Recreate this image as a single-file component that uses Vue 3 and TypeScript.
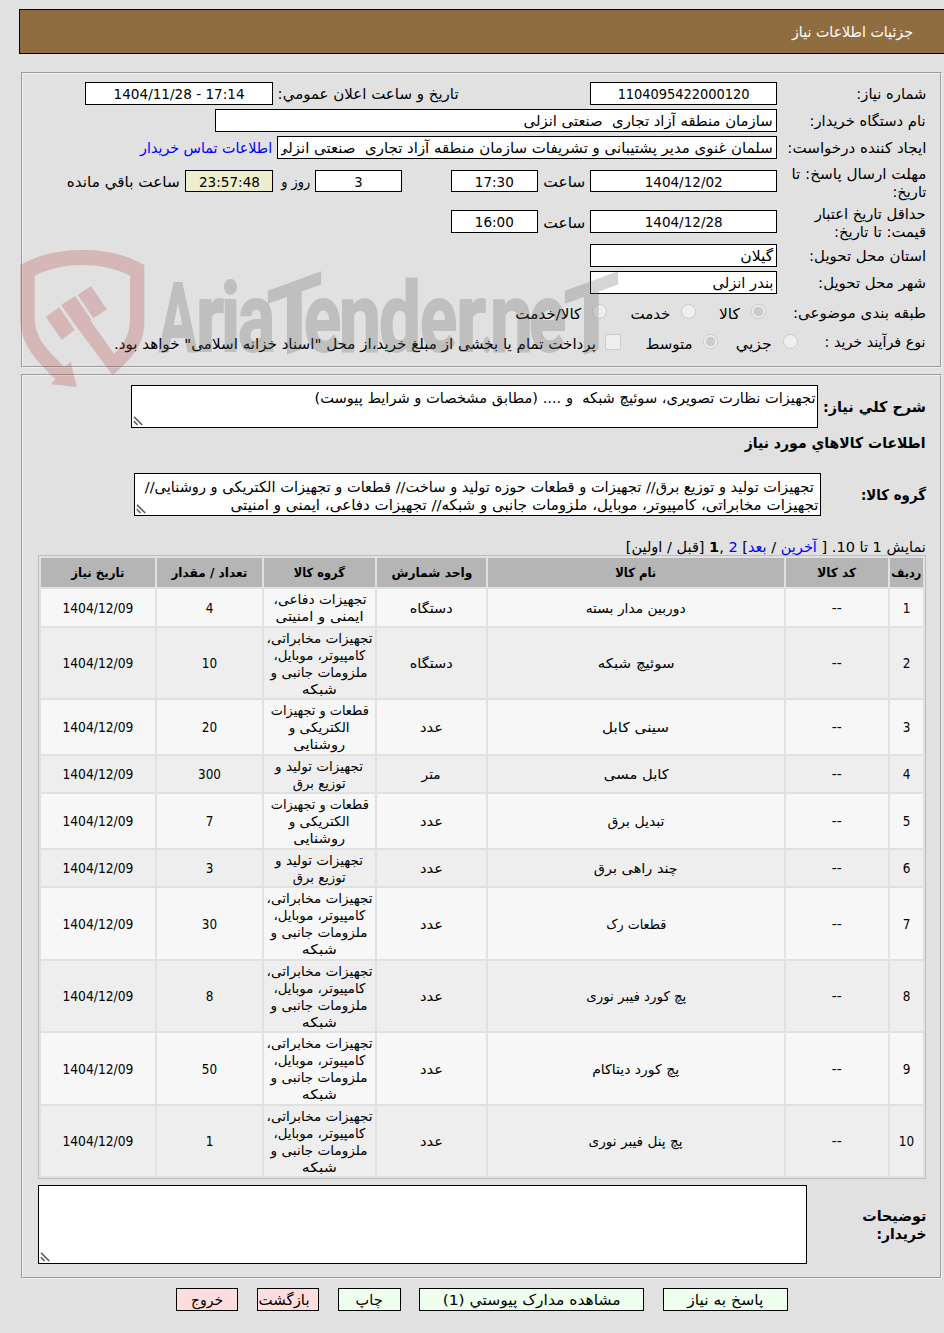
<script setup lang="ts">
interface FitText {
  text: string
  w: number
}

interface Item {
  id: number
  name: FitText
  unit: FitText
  group: FitText[]
  qty: number
}

// Stretch a run of text to the given width, and keep that width in the layout
const vFit = {
  mounted(el: HTMLElement, binding: { value: number }) {
    const natural = el.getBoundingClientRect().width
    if (!natural) return
    el.style.transform = `scaleX(${binding.value / natural})`
    el.style.marginLeft = `${binding.value - natural}px`
  }
}

const t = (text: string, w: number): FitText => ({ text, w })

const device = t('دستگاه', 43)
const piece = t('عدد', 23)
const meter = t('متر', 19)

const telecom = [
  t('تجهیزات مخابراتی،', 106),
  t('کامپیوتر، موبایل،', 92),
  t('ملزومات جانبی و', 97),
  t('شبکه', 35)
]
const electric = [t('قطعات و تجهیزات', 98), t('الکتریکی و', 61), t('روشنایی', 52)]
const power = [t('تجهیزات تولید و', 88), t('توزیع برق', 53)]
const safety = [t('تجهیزات دفاعی،', 93), t('ایمنی و امنیتی', 88)]

const headers = [
  t('ردیف', 30),
  t('کد کالا', 39),
  t('نام کالا', 41),
  t('واحد شمارش', 81),
  t('گروه کالا', 51),
  t('تعداد / مقدار', 76),
  t('تاریخ نیاز', 53)
]

const items: Item[] = [
  { id: 1, name: t('دوربین مدار بسته', 100), unit: device, group: safety, qty: 4 },
  { id: 2, name: t('سوئیچ شبکه', 77), unit: device, group: telecom, qty: 10 },
  { id: 3, name: t('سینی کابل', 67), unit: piece, group: electric, qty: 20 },
  { id: 4, name: t('کابل مسی', 65), unit: meter, group: power, qty: 300 },
  { id: 5, name: t('تبدیل برق', 57), unit: piece, group: electric, qty: 7 },
  { id: 6, name: t('چند راهی برق', 84), unit: piece, group: power, qty: 3 },
  { id: 7, name: t('قطعات رک', 60), unit: piece, group: telecom, qty: 30 },
  { id: 8, name: t('پچ کورد فیبر نوری', 100), unit: piece, group: telecom, qty: 8 },
  { id: 9, name: t('پچ کورد دیتاکام', 87), unit: piece, group: telecom, qty: 50 },
  { id: 10, name: t('پچ پنل فیبر نوری', 94), unit: piece, group: telecom, qty: 1 }
]

const buttons = [
  { ...t('پاسخ به نیاز', 76), cls: 'btn-reply' },
  { ...t('مشاهده مدارک پیوستي (1)', 178), cls: 'btn-docs' },
  { ...t('چاپ', 27), cls: 'btn-print' },
  { ...t('بازگشت', 51), cls: 'btn-back' },
  { ...t('خروج', 32), cls: 'btn-exit' }
]

// Wordmark letters: x, width, slanted
const letters: [string, number, number, boolean][] = [
  ['A', 159, 38, false],
  ['r', 196, 28, false],
  ['i', 221, 19, false],
  ['a', 238, 37, false],
  ['T', 267, 55, true],
  ['e', 304, 37, false],
  ['n', 339, 42, false],
  ['d', 379, 42, false],
  ['e', 420, 37, false],
  ['r', 456, 30, false],
  ['.', 481, 12, false],
  ['n', 490, 43, false],
  ['e', 529, 37, false],
  ['T', 564, 55, true]
]
</script>

<template>
  <div class="page" dir="rtl">
    <header class="title-bar"><span v-fit="121">جزئیات اطلاعات نیاز</span></header>

    <section class="panel summary">
      <div class="row">
        <label><span v-fit="70">شماره نیاز:</span></label>
        <div class="field w187 num"><span v-fit="132">1104095422000120</span></div>
        <div class="announce"><span v-fit="181">تاریخ و ساعت اعلان عمومي:</span></div>
        <div class="field w188 num"><span v-fit="131" dir="ltr">1404/11/28 - 17:14</span></div>
      </div>
      <div class="row">
        <label><span v-fit="116">نام دستگاه خریدار:</span></label>
        <div class="field w562"><span v-fit="249">سازمان منطقه آزاد تجاری&nbsp; صنعتی انزلی</span></div>
      </div>
      <div class="row">
        <label><span v-fit="139">ایجاد کننده درخواست:</span></label>
        <div class="field w500"><span v-fit="497">سلمان غنوی مدیر پشتیبانی و تشریفات سازمان منطقه آزاد تجاری&nbsp; صنعتی انزلی</span></div>
        <a class="after"><span v-fit="132">اطلاعات تماس خریدار</span></a>
      </div>
      <div class="row tall">
        <label><span v-fit="135">مهلت ارسال پاسخ: تا</span><br><span v-fit="34">تاریخ:</span></label>
        <div class="field short w187 num"><span v-fit="78">1404/12/02</span></div>
        <div class="hour"><span v-fit="42">ساعت</span></div>
        <div class="field short w87 num"><span v-fit="39">17:30</span></div>
        <div class="field short w87 num days">3</div>
        <div class="and"><span v-fit="29">روز و</span></div>
        <div class="field short w188 left-time num"><span v-fit="61">23:57:48</span></div>
        <div class="after"><span v-fit="113">ساعت باقي مانده</span></div>
      </div>
      <div class="row tall">
        <label><span v-fit="111">حداقل تاریخ اعتبار</span><br><span v-fit="92">قیمت: تا تاریخ:</span></label>
        <div class="field w187 num"><span v-fit="78">1404/12/28</span></div>
        <div class="hour"><span v-fit="42">ساعت</span></div>
        <div class="field w87 num"><span v-fit="39">16:00</span></div>
      </div>
      <div class="row">
        <label><span v-fit="117">استان محل تحویل:</span></label>
        <div class="field w187"><span v-fit="33">گیلان</span></div>
      </div>
      <div class="row">
        <label><span v-fit="108">شهر محل تحویل:</span></label>
        <div class="field w187"><span v-fit="61">بندر انزلی</span></div>
      </div>
      <div class="row kinds">
        <label><span v-fit="133">طبقه بندی موضوعی:</span></label>
        <i class="radio on first"></i><span class="opt"><span v-fit="21">کالا</span></span>
        <i class="radio"></i><span class="opt"><span v-fit="40">خدمت</span></span>
        <i class="radio"></i><span class="opt"><span v-fit="66">کالا/خدمت</span></span>
      </div>
      <div class="row process">
        <label class="narrow"><span v-fit="101">نوع فرآیند خرید :</span></label>
        <i class="radio first"></i><span class="opt"><span v-fit="36">جزیي</span></span>
        <i class="radio on"></i><span class="opt"><span v-fit="47">متوسط</span></span>
        <i class="check"></i>
        <span class="opt"><span v-fit="482">پرداخت تمام یا بخشی از مبلغ خرید،از محل "اسناد خزانه اسلامی" خواهد بود.</span></span>
      </div>
    </section>

    <section class="panel details">
      <div class="desc-row">
        <b><span v-fit="103">شرح کلي نیاز:</span></b>
        <div class="area area-desc">
          <span v-fit="501">تجهیزات نظارت تصویری، سوئیچ شبکه&nbsp; و .... (مطابق مشخصات و شرایط پیوست)</span>
          <svg class="grip" width="10" height="10" viewBox="0 0 10 10"><path d="M1 .8 9.2 9M.8 5.2 4.6 9" /></svg>
        </div>
      </div>
      <h3><span v-fit="181">اطلاعات کالاهاي مورد نیاز</span></h3>
      <div class="desc-row">
        <b class="group-label"><span v-fit="65">گروه کالا:</span></b>
        <div class="area area-group">
          <span class="indent" v-fit="669">تجهیزات تولید و توزیع برق// تجهیزات و قطعات حوزه تولید و ساخت// قطعات و تجهیزات الکتریکی و روشنایی//</span><br>
          <span v-fit="588">تجهیزات مخابراتی، کامپیوتر، موبایل، ملزومات جانبی و شبکه// تجهیزات دفاعی، ایمنی و امنیتی</span>
          <svg class="grip" width="10" height="10" viewBox="0 0 10 10"><path d="M1 .8 9.2 9M.8 5.2 4.6 9" /></svg>
        </div>
      </div>

      <div class="pager">
        <span v-fit="300">نمایش 1 تا 10. [ <a>آخرین</a> / <a>بعد</a>] <a>2</a> ,<b>1</b> [قبل / اولین]</span>
      </div>

      <table>
        <colgroup>
          <col class="c-row"><col class="c-code"><col class="c-name"><col class="c-unit"><col class="c-group"><col class="c-qty"><col class="c-date">
        </colgroup>
        <thead>
          <tr>
            <th v-for="h in headers" :key="h.text"><span v-fit="h.w">{{ h.text }}</span></th>
          </tr>
        </thead>
        <tbody>
          <tr v-for="item in items" :key="item.id">
            <td class="num">{{ item.id }}</td>
            <td class="num"><span v-fit="10">--</span></td>
            <td><span v-fit="item.name.w">{{ item.name.text }}</span></td>
            <td><span v-fit="item.unit.w">{{ item.unit.text }}</span></td>
            <td class="group">
              <div v-for="line in item.group" :key="line.text"><span v-fit="line.w">{{ line.text }}</span></div>
            </td>
            <td class="num">{{ item.qty }}</td>
            <td class="num"><span v-fit="71">1404/12/09</span></td>
          </tr>
        </tbody>
      </table>

      <div class="notes">
        <b><span v-fit="64">توضیحات</span><br><span v-fit="50">خریدار:</span></b>
        <div class="area area-notes">
          <svg class="grip" width="10" height="10" viewBox="0 0 10 10"><path d="M1 .8 9.2 9M.8 5.2 4.6 9" /></svg>
        </div>
      </div>
    </section>

    <footer class="actions">
      <button v-for="b in buttons" :key="b.cls" type="button" :class="b.cls"><span v-fit="b.w">{{ b.text }}</span></button>
    </footer>

    <svg class="watermark" width="640" height="150" viewBox="0 245 640 150">
      <g fill="#b53d41" fill-opacity=".25">
        <path d="M20.3 265C40 254 60 250 82.3 250S125 254 144.3 265V322C144.3 345 132 358 112.7 375.3L78.3 329.3 61 305 75.3 296 91 319.3 90.5 320.5 114 354C126 342 130 332 130 318V275.7C115 268 98 265 82.3 265S50 268 34.7 275.7V318C35 340 50 352 64.3 367L70.7 361.7 76.7 387 50.7 384.3 55.3 379.3C36 360 20.3 345 20.3 318Z" />
        <path d="M45.7 316.7 59.3 307.3 74.7 330 61.7 340ZM77.7 295 91 286 106.7 309.3 93.3 318.3Z" />
      </g>
      <g class="wordmark">
        <text
          v-for="([ch, x, w, slanted], i) in letters"
          :key="i"
          x="0"
          y="0"
          :textLength="w"
          lengthAdjust="spacingAndGlyphs"
          :transform="slanted ? `translate(${x} 361) skewY(-20)` : `translate(${x} 351)`"
        >{{ ch }}</text>
      </g>
    </svg>
  </div>
</template>

<style>
body {
  background: #e1e1e1;
}
</style>

<style scoped>
.page {
  position: relative;
  box-sizing: border-box;
  width: 944px;
  height: 1333px;
  padding-top: 9px;
  overflow: hidden;
  background: #e1e1e1;
  color: #000;
  font: 14.8px/18px 'DejaVu Sans', sans-serif;
}

.page span {
  display: inline-block;
  white-space: nowrap;
  transform-origin: right center;
}

a {
  color: #00f;
}

.title-bar {
  box-sizing: border-box;
  height: 45px;
  margin-left: 19px;
  padding: 13px 31px 0 0;
  border: 1px solid #000;
  border-right: 0;
  background: #8f6d40;
  color: #fff;
}

.panel {
  box-sizing: border-box;
  width: 921px;
  margin-right: 2px;
  padding-right: 14px;
  border: 2px groove #f0f0f0;
}

.summary {
  height: 296px;
  margin-top: 18px;
  padding-top: 6px;
}

.row {
  display: flex;
  align-items: center;
  height: 27px;
  white-space: nowrap;
}

.row.tall {
  height: 40.5px;
}

.row label {
  flex: none;
  width: 149px;
}

.row.tall label {
  padding-top: 3px;
}

.row label.narrow {
  width: 128px;
}

.field {
  box-sizing: border-box;
  flex: none;
  height: 23px;
  padding: 2px 3px 0;
  border: 1px solid #000;
  background: #fff;
  overflow: hidden;
}

.field.short {
  height: 22px;
}

.num {
  font-family: 'DejaVu Sans Condensed', 'DejaVu Sans', sans-serif;
  font-size: 14.6px;
  text-align: center;
}

.w87 { width: 87px; }
.w187 { width: 187px; }
.w188 { width: 188px; }
.w562 { width: 562px; }

.w500 {
  width: 500px;
  overflow: clip;
  overflow-clip-margin: content-box;
}

.left-time {
  width: 88px;
  background: #eeeecc;
}

.announce {
  box-sizing: border-box;
  width: 317px;
  padding-right: 131px;
}

.hour {
  box-sizing: border-box;
  width: 52px;
  padding-top: 2px;
  padding-right: 5px;
}

.days {
  margin-right: 49px;
}

.and {
  box-sizing: border-box;
  width: 42px;
  padding-top: 2px;
  padding-right: 5px;
}

.after {
  margin-right: 5px;
}

.tall .after {
  padding-top: 2px;
}

.kinds {
  height: 31px;
}

.process {
  height: 29px;
}

.radio {
  box-sizing: border-box;
  flex: none;
  width: 15px;
  height: 15px;
  margin-right: 23px;
  border: 1px solid #cbcbcb;
  border-radius: 50%;
  background: #efefef;
}

.radio.on {
  background: radial-gradient(circle, #cbcbcb 0 4.5px, #efefef 5.2px);
}

.kinds .first {
  margin-right: 11px;
}

.kinds label {
  padding-top: 2px;
}

.process .first {
  margin-right: 0;
}

.process .on {
  margin-right: 18px;
}

.opt {
  margin-top: 5px;
  margin-right: 11px;
}

.check {
  box-sizing: border-box;
  flex: none;
  width: 16px;
  height: 16px;
  margin-right: 24px;
  border: 1px solid #cbcbcb;
  border-radius: 2px;
  background: #efefef;
}

.check + .opt {
  margin-right: 9px;
}

.details {
  height: 905px;
  margin-top: 6px;
  padding-top: 9px;
}

.desc-row {
  display: flex;
  align-items: center;
}

.desc-row b {
  width: 108px;
}

.desc-row b.group-label {
  width: 105px;
}

.area {
  position: relative;
  box-sizing: border-box;
  width: 687px;
  height: 43px;
  border: 1px solid #000;
  background: #fff;
  white-space: nowrap;
  overflow: hidden;
}

.area-desc {
  padding: 3px 2px 0;
}

.area-group {
  padding: 4px 1px 0;
}

.indent {
  margin-right: 5px;
}

.grip {
  position: absolute;
  bottom: 1px;
  left: 1px;
  fill: none;
  stroke: #555;
  stroke-width: 1.5;
}

h3 {
  height: 18px;
  margin: 6px 0 21px;
  font-size: 15px;
}

.pager {
  height: 17px;
  margin-top: 22px;
}

.pager a,
.pager b {
  white-space: pre;
}

table {
  width: 888px;
  table-layout: fixed;
  border: 1px solid #bebebe;
  border-collapse: separate;
  border-spacing: 2px;
  font-size: 13.4px;
  line-height: 17px;
}

.c-row { width: 33px; }
.c-code { width: 102px; }
.c-name { width: 296px; }
.c-unit { width: 109px; }
.c-group { width: 111px; }
.c-qty { width: 105px; }
.c-date { width: 114px; }

th {
  height: 29px;
  padding: 0;
  background: #b5b5b5;
  font-size: 12.5px;
  text-align: center;
}

td {
  padding: 2px 0 .5px;
  background: #f7f7f7;
  text-align: center;
}

td.num {
  font-size: 13.4px;
}

tbody tr:nth-child(even) td {
  background: #eee;
}

.notes {
  display: flex;
  align-items: center;
  height: 79px;
  margin-top: 6px;
}

.notes b {
  width: 119px;
  padding-top: 1px;
}

.area-notes {
  width: 769px;
  height: 79px;
}

.actions {
  display: flex;
  margin-top: 9px;
  padding-right: 156px;
}

.actions button {
  box-sizing: border-box;
  height: 23px;
  padding: 0;
  border: 1px solid #000;
  background: #eeffee;
  color: #000;
  font: inherit;
}

.actions button + button {
  margin-right: 19px;
}

.actions .btn-reply { width: 125px; }
.actions .btn-docs { width: 225px; }

.actions button.btn-print {
  width: 63px;
  margin-right: 18px;
}

.actions .btn-back {
  width: 62px;
  padding-right: 0;
  padding-left: 5px;
  background: #ffdddd;
  text-align: right;
}

.actions .btn-back span {
  position: relative;
  right: 8px;
}

.actions .btn-exit {
  width: 62px;
  background: #ffdddd;
}

.watermark {
  position: absolute;
  top: 245px;
  left: 0;
  direction: ltr;
  pointer-events: none;
}

.wordmark {
  font: 700 97px Roboto, sans-serif;
  fill: #5d5d5d;
  stroke: #5d5d5d;
  stroke-width: 2;
  opacity: .25;
}
</style>
